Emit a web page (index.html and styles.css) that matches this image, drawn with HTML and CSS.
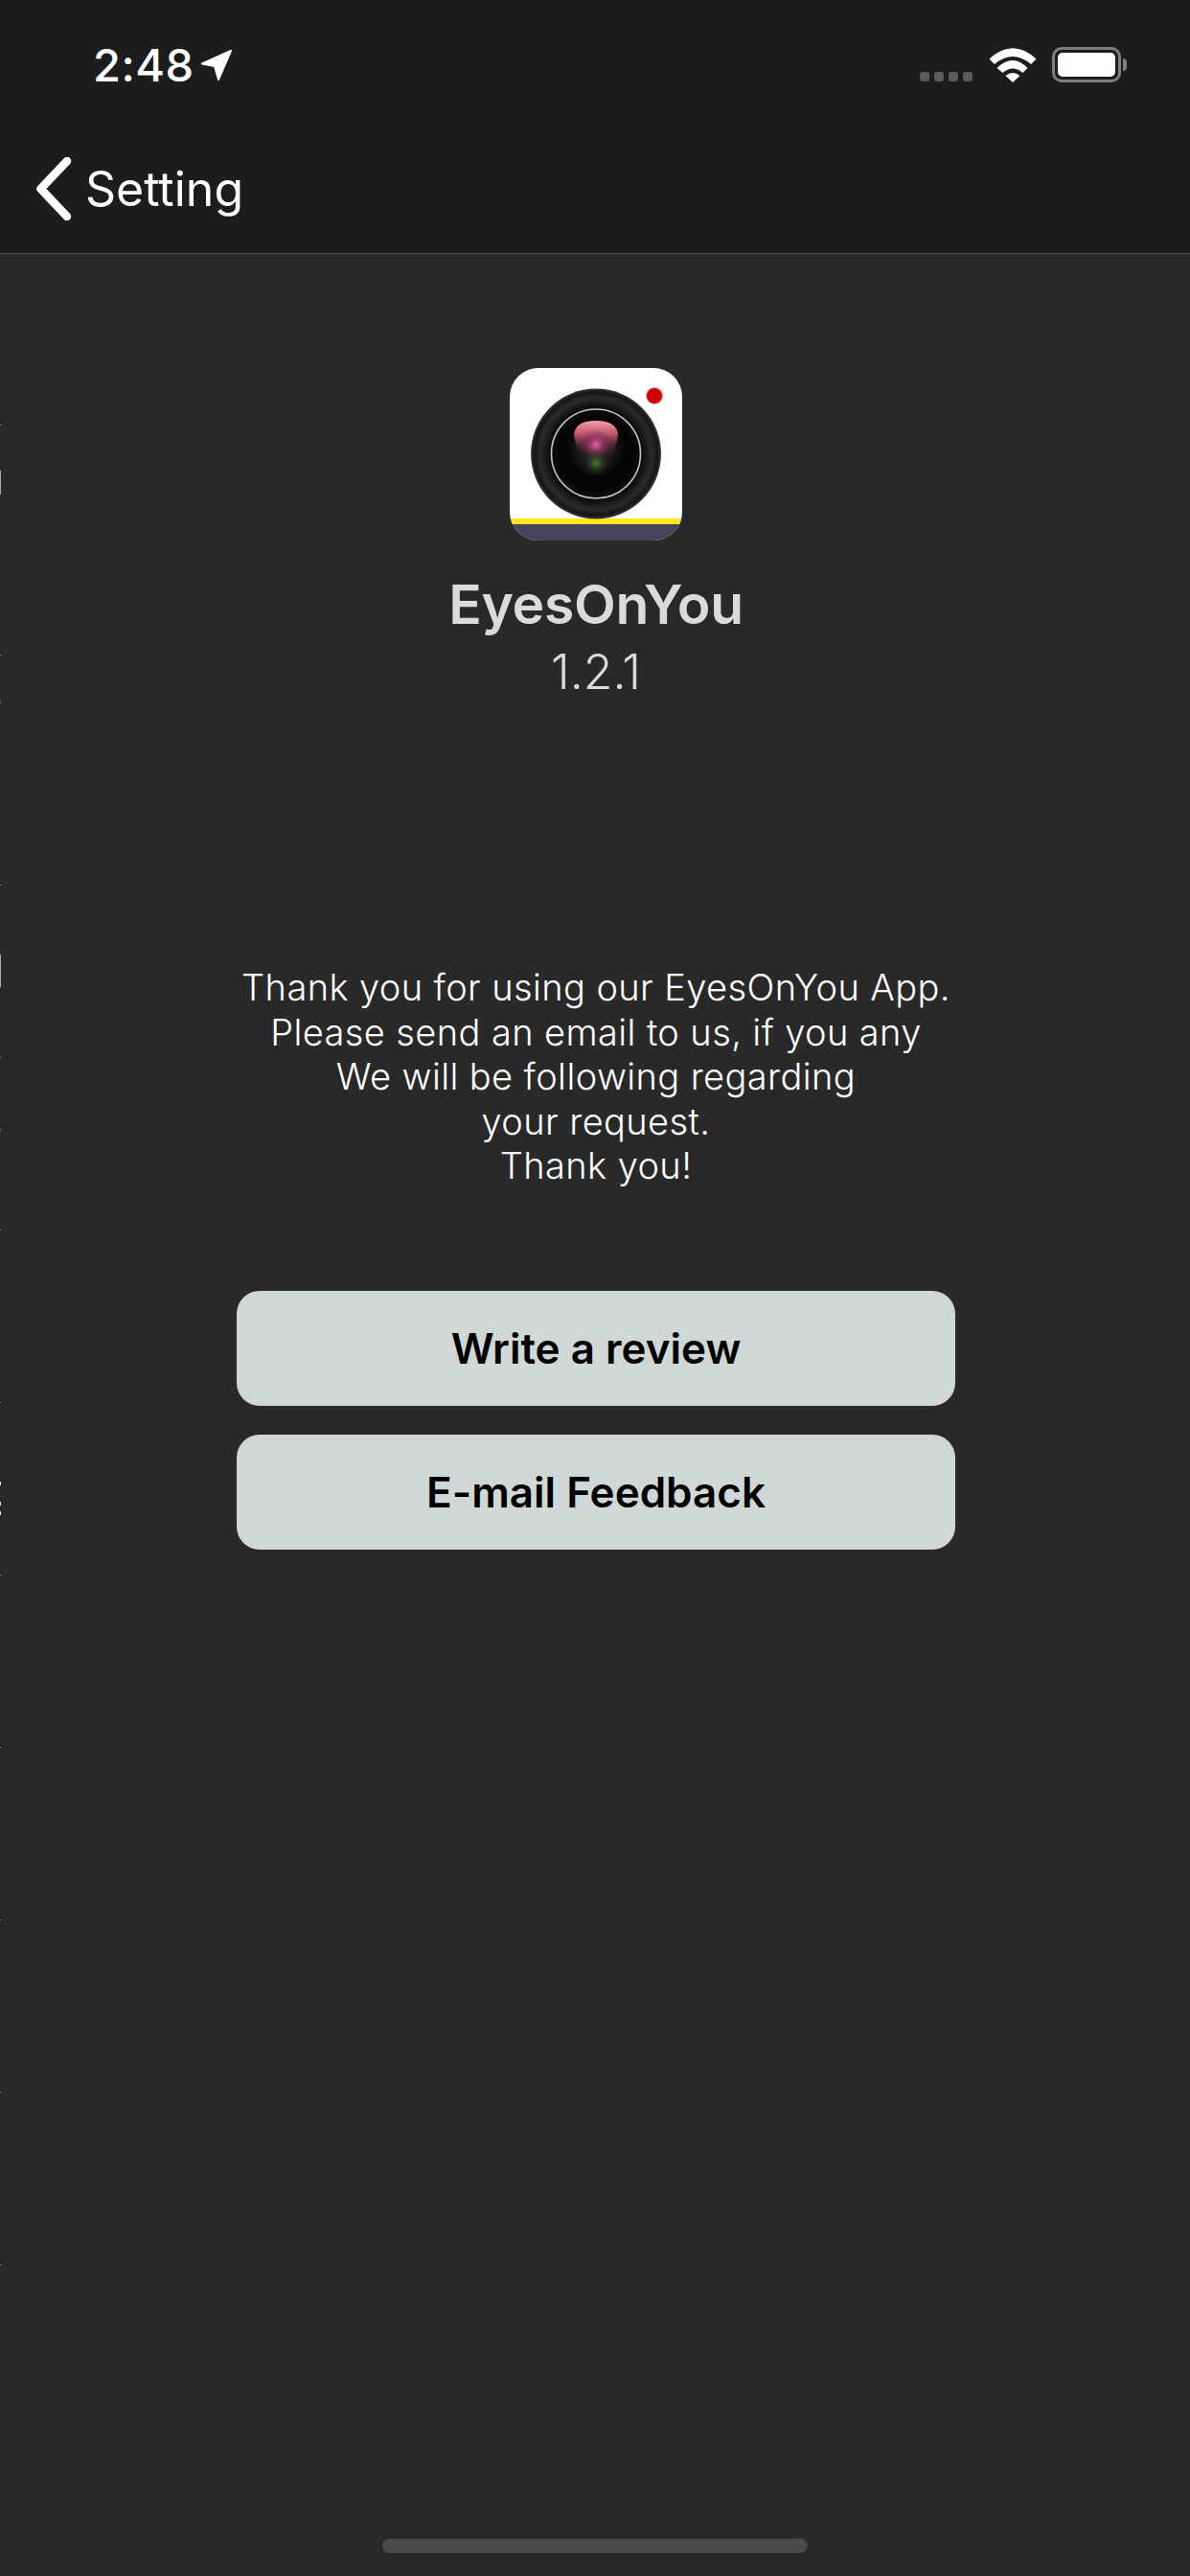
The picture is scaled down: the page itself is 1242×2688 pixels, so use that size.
FILE: index.html
```html
<!DOCTYPE html>
<html lang="en">
<head>
    <meta charset="UTF-8">
    <meta name="viewport" content="width=device-width, initial-scale=1.0">
    <title>EyesOnYou</title>
    <link rel="stylesheet" href="styles.css">
</head>
<body>
    <header class="top-bar">
        <div class="status-bar">
            <div class="status-left">
                <span class="clock">2:48</span>
                <svg class="location-icon" width="34" height="34" viewBox="0 0 34 34">
                    <path d="M2 15.5 L32 2 L19 32 L15 18 Z" fill="#fff" stroke="#fff" stroke-width="2" stroke-linejoin="round"/>
                </svg>
            </div>
            <div class="status-right">
                <div class="signal-dots">
                    <span class="dot"></span>
                    <span class="dot"></span>
                    <span class="dot"></span>
                    <span class="dot"></span>
                </div>
                <svg class="wifi-icon" width="50" height="36" viewBox="0 0 50 36">
                    <path d="M0.5 11.5 Q25 -11 49.5 11.5 L44 17 Q25 1 6 17 Z" fill="#fff"/>
                    <path d="M8.5 21 Q25 5 40.5 21 L35.5 26 Q25 17 14.5 26 Z" fill="#fff"/>
                    <path d="M17.5 29 Q25 23 32.5 29 L25 36 Z" fill="#fff"/>
                </svg>
                <div class="battery">
                    <div class="battery-body"><div class="battery-fill"></div></div>
                    <div class="battery-cap"></div>
                </div>
            </div>
        </div>
        <nav class="nav-bar">
            <svg class="back-icon" width="40" height="66" viewBox="0 0 40 66">
                <path d="M34 4 L6.5 33 L34 62" fill="none" stroke="#fff" stroke-width="8.5" stroke-linecap="round" stroke-linejoin="round"/>
            </svg>
            <span class="nav-title">Setting</span>
        </nav>
    </header>

    <main class="content">
        <svg class="app-icon" width="180" height="180" viewBox="0 0 180 180">
            <defs>
                <clipPath id="iconClip"><rect width="180" height="180" rx="30"/></clipPath>
                <radialGradient id="lensRing" cx="50%" cy="50%" r="50%">
                    <stop offset="0.72" stop-color="#0e0e0e"/>
                    <stop offset="0.86" stop-color="#2b2b2b"/>
                    <stop offset="0.95" stop-color="#151515"/>
                    <stop offset="1" stop-color="#3a3a3a"/>
                </radialGradient>
                <radialGradient id="lensGlass" cx="50%" cy="50%" r="50%">
                    <stop offset="0" stop-color="#3a2c2c"/>
                    <stop offset="0.55" stop-color="#1e1a1a"/>
                    <stop offset="1" stop-color="#060606"/>
                </radialGradient>
                <linearGradient id="lensGlare" x1="0" y1="0" x2="0" y2="1">
                    <stop offset="0" stop-color="#f8a0aa"/>
                    <stop offset="0.4" stop-color="#b85068"/>
                    <stop offset="1" stop-color="#4a2030" stop-opacity="0"/>
                </linearGradient>
                <radialGradient id="pinkSpot" cx="50%" cy="50%" r="50%">
                    <stop offset="0" stop-color="#f060a8"/>
                    <stop offset="0.4" stop-color="#a03a70" stop-opacity="0.8"/>
                    <stop offset="1" stop-color="#5a2440" stop-opacity="0"/>
                </radialGradient>
                <radialGradient id="greenSpot" cx="50%" cy="50%" r="50%">
                    <stop offset="0" stop-color="#4a7a38"/>
                    <stop offset="1" stop-color="#1c2c14" stop-opacity="0"/>
                </radialGradient>
                <radialGradient id="recDot" cx="50%" cy="50%" r="50%">
                    <stop offset="0.72" stop-color="#cf0000"/>
                    <stop offset="0.85" stop-color="#d81818"/>
                    <stop offset="1" stop-color="#f8d0d0"/>
                </radialGradient>
            </defs>
            <g clip-path="url(#iconClip)">
                <rect width="180" height="180" fill="#fff"/>
                <rect y="157" width="180" height="6" fill="#ffe81f"/>
                <rect y="163" width="180" height="17" fill="#46435a"/>
                <circle cx="90" cy="89.5" r="68" fill="url(#lensRing)"/>
                <circle cx="90" cy="89.5" r="46.5" fill="#0a0a0a" stroke="#c4c4c4" stroke-width="1.6"/>
                <circle cx="90" cy="89.5" r="40" fill="#040404"/>
                <circle cx="90" cy="84" r="30" fill="url(#lensGlass)"/>
                <path d="M67 70 Q68 55 90 55 Q112 55 113 70 Q111 82 106 92 L74 92 Q69 82 67 70 Z" fill="url(#lensGlare)"/>
                <circle cx="90" cy="80" r="16" fill="url(#pinkSpot)"/>
                <circle cx="90" cy="99" r="14" fill="url(#greenSpot)"/>
                <circle cx="151" cy="29" r="9" fill="url(#recDot)"/>
            </g>
        </svg>
        <h1 class="app-name">EyesOnYou</h1>
        <div class="app-version">1.2.1</div>

        <p class="message">
            Thank you for using our EyesOnYou App.<br>
            Please send an email to us, if you any<br>
            We will be following regarding<br>
            your request.<br>
            Thank you!
        </p>

        <div class="actions">
            <button class="action-btn">Write a review</button>
            <button class="action-btn">E-mail Feedback</button>
        </div>
    </main>

    <div class="home-indicator"></div>

    <!-- stray marks along the left edge of the capture -->
    <svg class="edge-marks" width="2" height="2688" viewBox="0 0 2 2688">
        <g fill="#8a8a8a">
            <rect y="443" width="1" height="1"/>
            <rect y="683" width="1" height="1"/>
            <rect y="923" width="1" height="1"/>
            <rect y="1103" width="1" height="1"/>
            <rect y="1283" width="1" height="1"/>
            <rect y="1463" width="1" height="1"/>
            <rect y="1643" width="1" height="1"/>
            <rect y="1823" width="1" height="1"/>
            <rect y="2003" width="1" height="1"/>
            <rect y="2183" width="1" height="1"/>
            <rect y="2363" width="1" height="1"/>
        </g>
        <g fill="#5a5a5a">
            <rect y="731" width="1" height="3"/>
            <rect y="1178" width="1" height="3"/>
        </g>
        <rect y="491" width="1" height="25" fill="#a8a8a8"/>
        <rect y="996" width="1" height="34" fill="#a8a8a8"/>
        <g fill="#e0e0e0">
            <rect y="1546" width="1" height="4"/>
            <rect y="1567" width="1" height="4"/>
            <rect y="1577" width="1" height="4"/>
        </g>
    </svg>
</body>
</html>
```

FILE: styles.css
```css
* {
    box-sizing: border-box;
    margin: 0;
    padding: 0;
}

html, body {
    height: 100%;
}

body {
    position: relative;
    display: flex;
    flex-direction: column;
    font-family: Inter, "Liberation Sans", sans-serif;
    background-color: #292929;
    color: #FFFFFF;
    overflow: hidden;
}

.top-bar {
    height: 265px;
    background-color: #1c1c1c;
    border-bottom: 1px solid #4a4a4a;
}

.status-bar {
    height: 132px;
    display: flex;
    justify-content: space-between;
    align-items: flex-start;
    padding: 44px 66px 0 97px;
}

.status-left {
    display: flex;
    align-items: center;
    gap: 6px;
}

.clock {
    font-size: 47px;
    line-height: 48px;
    font-weight: 500;
    letter-spacing: 0.5px;
}

.status-right {
    display: flex;
    align-items: center;
    padding-top: 5px;
}

.signal-dots {
    display: flex;
    gap: 5px;
    margin: 25px 17px 0 0;
}

.dot {
    width: 10px;
    height: 10px;
    border-radius: 3px;
    background-color: #5c5c5c;
}

.wifi-icon {
    margin-right: 16px;
}

.battery {
    display: flex;
    align-items: center;
}

.battery-body {
    width: 72px;
    height: 37px;
    border: 3px solid #7d7d7d;
    border-radius: 10px;
    padding: 3px;
}

.battery-fill {
    width: 100%;
    height: 100%;
    background-color: #FFFFFF;
    border-radius: 5px;
}

.battery-cap {
    width: 4px;
    height: 13px;
    margin-left: 2px;
    background-color: #7d7d7d;
    border-radius: 0 6px 6px 0;
}

.nav-bar {
    display: flex;
    align-items: center;
    height: 66px;
    margin-top: 32px;
    padding-left: 36px;
}

.back-icon {
    margin-right: 13px;
}

.nav-title {
    font-size: 50px;
    font-weight: 380;
}

.content {
    flex: 1;
    display: flex;
    flex-direction: column;
    align-items: center;
    padding: 119px 0 0 2px;
}

.app-icon {
    display: block;
}

.app-name {
    margin-top: 34px;
    font-size: 57px;
    line-height: 66px;
    font-weight: 600;
    letter-spacing: -0.3px;
    color: #D9DCDF;
}

.app-version {
    margin-top: 8px;
    font-size: 50px;
    line-height: 58px;
    font-weight: 300;
    color: #D9DCDF;
}

.message {
    margin-top: 277px;
    font-size: 38px;
    line-height: 46.5px;
    font-weight: 350;
    text-align: center;
    letter-spacing: 0.4px;
}

.actions {
    display: flex;
    flex-direction: column;
    gap: 30px;
    margin-top: 107px;
}

.action-btn {
    width: 750px;
    height: 120px;
    border: none;
    border-radius: 24px;
    background-color: #D0D8D7;
    color: #000000;
    font-family: inherit;
    font-size: 44px;
    font-weight: 600;
}

.home-indicator {
    position: absolute;
    left: 399px;
    bottom: 24px;
    width: 444px;
    height: 15px;
    border-radius: 8px;
    background-color: #4A4A4A;
}

.edge-marks {
    position: absolute;
    top: 0;
    left: 0;
}
```
